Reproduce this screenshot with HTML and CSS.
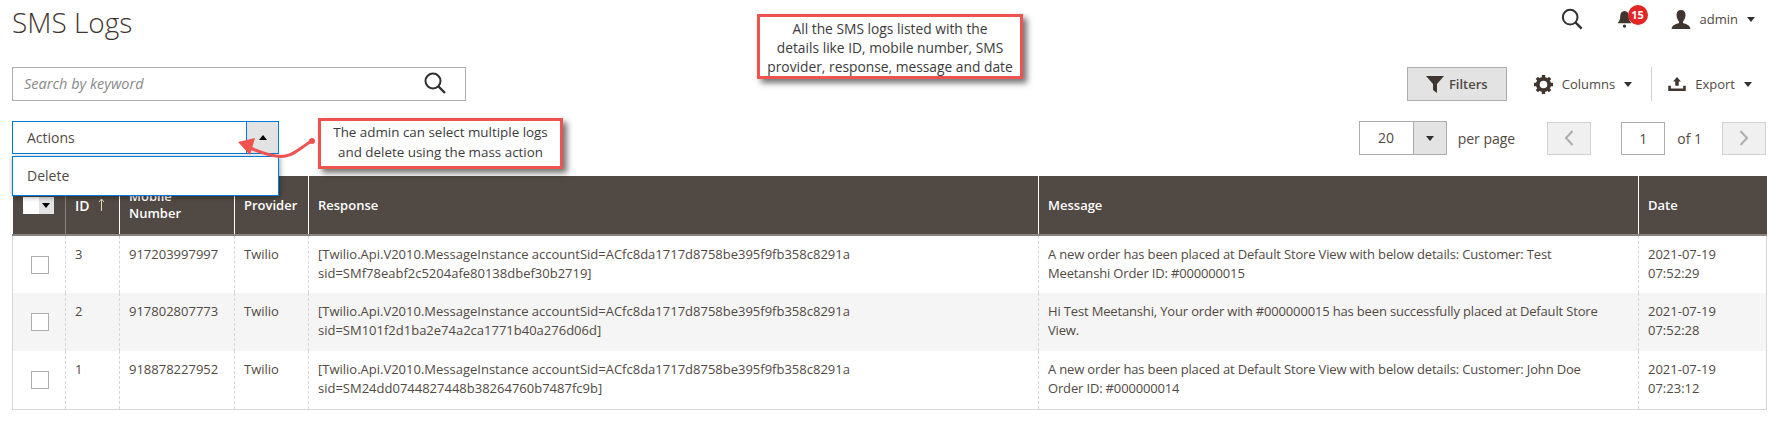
FILE: index.html
```html
<!DOCTYPE html>
<html>
<head>
    <title>SMS Logs</title>
    <link rel="stylesheet" href="styles.css">
</head>
<body>
    <div class="page">
        <header class="page-header">
            <h1>SMS Logs</h1>
            <div class="admin-bar">
                <svg class="top-search" width="22" height="22" viewBox="0 0 24 24"><circle cx="10" cy="10" r="8" fill="none" stroke="#303030" stroke-width="2.200"/><path d="M15.500 15.500L22.500 22.500" stroke="#303030" stroke-width="2.600"/></svg>
                <div class="bell">
                    <svg width="15" height="19" viewBox="0 0 16 20"><path d="M8 1c-3 0-4.500 2.500-4.500 5 0 4-1 6-3 8h15c-2-2-3-4-3-8 0-2.500-1.500-5-4.500-5z" fill="#41362f"/><circle cx="8" cy="17" r="1.800" fill="#41362f"/></svg>
                    <span class="badge">15</span>
                </div>
                <div class="user">
                    <svg width="20" height="19" viewBox="0 0 20 19"><path d="M10 0c3 0 4.500 2 4.500 5s-1.500 5.500-2.500 6.500v1.500c3 1 7 2 7.500 6H.5c.5-4 4.500-5 7.500-6v-1.500C7 10.500 5.500 8 5.500 5S7 0 10 0z" fill="#41362f"/></svg>
                    <span>admin</span>
                    <i class="caret"></i>
                </div>
            </div>
        </header>

        <div class="toolbar">
            <div class="search-box">
                <span>Search by keyword</span>
                <svg width="24" height="24" viewBox="0 0 24 24"><circle cx="10" cy="10" r="7.500" fill="none" stroke="#303030" stroke-width="2"/><path d="M15.500 15.500L22 22" stroke="#303030" stroke-width="2.400"/></svg>
            </div>
            <div class="tools">
                <button class="filters">
                    <svg width="18" height="17" viewBox="0 0 18 17"><path d="M0 0h18l-7 8v9l-4-3V8z" fill="#41362f"/></svg>
                    Filters
                </button>
                <div class="tool columns">
                    <svg width="19" height="19" viewBox="0 0 20 20"><circle cx="10" cy="10" r="6" fill="none" stroke="#41362f" stroke-width="4"/><path d="M10 0v20M0 10h20M3 3l14 14M17 3L3 17" stroke="#41362f" stroke-width="3.500" stroke-dasharray="3.500 13"/></svg>
                    <span>Columns</span>
                    <i class="caret"></i>
                </div>
                <div class="tool export">
                    <svg width="18" height="14" viewBox="0 0 20 16"><path d="M10 0l4.500 5H12v5H8V5H5.500zM0 10h3v3h14v-3h3v6H0z" fill="#41362f"/></svg>
                    <span>Export</span>
                    <i class="caret"></i>
                </div>
            </div>
        </div>

        <div class="toolbar second">
            <div class="actions">
                <span class="actions-label">Actions</span>
                <span class="actions-toggle"><i class="caret up"></i></span>
                <div class="actions-menu">Delete</div>
            </div>
            <div class="pager">
                <div class="per-page-select">
                    <span>20</span>
                    <span class="select-toggle"><i class="caret"></i></span>
                </div>
                <span class="per-page">per page</span>
                <span class="page-btn prev"><svg width="10" height="16" viewBox="0 0 10 16"><path d="M8.500 1L2 8l6.500 7" fill="none" stroke="#adadad" stroke-width="2"/></svg></span>
                <span class="page-input">1</span>
                <span class="page-of">of 1</span>
                <span class="page-btn"><svg width="10" height="16" viewBox="0 0 10 16"><path d="M1.500 1L8 8l-6.500 7" fill="none" stroke="#adadad" stroke-width="2"/></svg></span>
            </div>
        </div>

        <table class="grid">
            <colgroup>
                <col class="col-check"><col class="col-id"><col class="col-number"><col class="col-provider"><col class="col-response"><col class="col-message"><col class="col-date">
            </colgroup>
            <thead>
                <tr>
                    <th><span class="head-check"><b></b><span class="head-toggle"><i class="caret small"></i></span></span></th>
                    <th class="head-id">ID <svg class="sort" width="7" height="13" viewBox="0 0 7 13"><path d="M3.500 13V1M1 4l2.500-3L6 4" fill="none" stroke="#e4dcb8" stroke-width="1"/></svg></th>
                    <th>Mobile Number</th>
                    <th>Provider</th>
                    <th>Response</th>
                    <th>Message</th>
                    <th>Date</th>
                </tr>
            </thead>
            <tbody>
                <tr>
                    <td><span class="check"></span></td>
                    <td>3</td>
                    <td>917203997997</td>
                    <td>Twilio</td>
                    <td>[Twilio.Api.V2010.MessageInstance accountSid=ACfc8da1717d8758be395f9fb358c8291a<br>sid=SMf78eabf2c5204afe80138dbef30b2719]</td>
                    <td class="message">A new order has been placed at Default Store View with below details: Customer: Test<br>Meetanshi Order ID: #000000015</td>
                    <td>2021-07-19<br>07:52:29</td>
                </tr>
                <tr>
                    <td><span class="check"></span></td>
                    <td>2</td>
                    <td>917802807773</td>
                    <td>Twilio</td>
                    <td>[Twilio.Api.V2010.MessageInstance accountSid=ACfc8da1717d8758be395f9fb358c8291a<br>sid=SM101f2d1ba2e74a2ca1771b40a276d06d]</td>
                    <td class="message">Hi Test Meetanshi, Your order with #000000015 has been successfully placed at Default Store<br>View.</td>
                    <td>2021-07-19<br>07:52:28</td>
                </tr>
                <tr>
                    <td><span class="check"></span></td>
                    <td>1</td>
                    <td>918878227952</td>
                    <td>Twilio</td>
                    <td>[Twilio.Api.V2010.MessageInstance accountSid=ACfc8da1717d8758be395f9fb358c8291a<br>sid=SM24dd0744827448b38264760b7487fc9b]</td>
                    <td class="message">A new order has been placed at Default Store View with below details: Customer: John Doe<br>Order ID: #000000014</td>
                    <td>2021-07-19<br>07:23:12</td>
                </tr>
            </tbody>
        </table>

        <div class="callout callout-top">All the SMS logs listed with the<br>details like ID, mobile number, SMS<br>provider, response, message and date</div>
        <div class="callout callout-mass">The admin can select multiple logs<br>and delete using the mass action</div>
        <svg class="callout-arrow" width="86" height="36" viewBox="0 0 86 36">
            <path d="M76 6C64 12 56 24 40 21 32 20 24 17 14 13" fill="none" stroke="#ef5350" stroke-width="3"/>
            <circle cx="76" cy="6" r="3" fill="#ef5350"/>
            <path d="M2 7l17-4-5 17z" fill="#ef5350"/>
        </svg>
    </div>
</body>
</html>
```

FILE: styles.css
```css
body {
    font-family: "Open Sans", Arial, sans-serif;
    font-size: 13px;
    color: #514943;
    margin: 0;
    background-color: #fff;
}

.page {
    position: relative;
    height: 422px;
    padding: 0 12px;
    box-sizing: border-box;
    overflow: hidden;
}

.page-header {
    display: flex;
    justify-content: space-between;
    height: 67px;
}

h1 {
    margin: 3px 0 0;
    font-size: 28px;
    font-weight: 300;
    line-height: 38px;
    color: #41362f;
}

.admin-bar {
    display: flex;
    align-items: center;
    height: 38px;
    padding-right: 11px;
}

.top-search {
    margin-right: 34px;
}

.bell {
    position: relative;
    display: flex;
    margin-right: 39px;
}

.badge {
    position: absolute;
    left: 11px;
    top: -5px;
    width: 20px;
    height: 20px;
    border-radius: 50%;
    background-color: #e22626;
    color: #fff;
    font-size: 11px;
    font-weight: 700;
    line-height: 20px;
    text-align: center;
}

.user {
    display: flex;
    align-items: center;
    gap: 9px;
}

.caret {
    display: inline-block;
    width: 0;
    height: 0;
    border-left: 4.500px solid transparent;
    border-right: 4.500px solid transparent;
    border-top: 5px solid #303030;
}

.caret.up {
    border-top: 0;
    border-bottom: 5px solid #000;
}

.caret.small {
    border-left-width: 4px;
    border-right-width: 4px;
    border-top-color: #000;
}

.toolbar {
    display: flex;
    justify-content: space-between;
    height: 34px;
}

.toolbar.second {
    height: 34px;
    margin-top: 20px;
}

.search-box {
    display: flex;
    align-items: center;
    justify-content: space-between;
    width: 454px;
    padding: 0 18px 2px 11px;
    box-sizing: border-box;
    border: 1px solid #adadad;
    font-size: 14.500px;
    font-style: italic;
    color: #8a8a8a;
}

.tools {
    display: flex;
    align-items: center;
    padding-right: 14px;
}

.filters {
    display: flex;
    align-items: center;
    justify-content: center;
    gap: 5px;
    width: 100px;
    height: 34px;
    margin-right: 27px;
    padding: 0;
    border: 1px solid #adadad;
    background-color: #e3e3e3;
    color: #514943;
    font-family: inherit;
    font-size: 13px;
    font-weight: 600;
}

.tool {
    display: flex;
    align-items: center;
    height: 34px;
    gap: 9px;
}

.columns {
    padding-right: 19px;
    border-right: 1px solid #d0d0d0;
    margin-right: 16px;
}

.actions {
    position: relative;
    display: flex;
    width: 267px;
    height: 33px;
    border: 1px solid #007bdb;
    box-sizing: border-box;
}

.actions-label {
    flex: 1;
    padding-left: 14px;
    line-height: 31px;
    font-size: 14px;
}

.actions-toggle {
    display: flex;
    align-items: center;
    justify-content: center;
    width: 31px;
    border-left: 1px solid #007bdb;
    background-color: #e3e3e3;
}

.actions-menu {
    position: absolute;
    left: -1px;
    right: -1px;
    top: 34px;
    height: 40px;
    box-sizing: border-box;
    padding-left: 14px;
    border: 1px solid #007bdb;
    background-color: #fff;
    font-size: 14px;
    line-height: 38px;
    box-shadow: 1px 1px 5px rgba(0, 0, 0, 0.4);
    z-index: 2;
}

.pager {
    display: flex;
    align-items: center;
}

.per-page-select {
    display: flex;
    width: 88px;
    height: 34px;
    box-sizing: border-box;
    border: 1px solid #adadad;
    font-size: 14px;
    line-height: 32px;
    text-align: center;
}

.per-page-select > span:first-child {
    flex: 1;
}

.select-toggle {
    display: flex;
    align-items: center;
    justify-content: center;
    width: 32px;
    border-left: 1px solid #adadad;
    background-color: #e3e3e3;
}

.per-page {
    margin: 0 32px 0 11px;
    font-size: 14px;
}

.page-btn {
    display: flex;
    align-items: center;
    justify-content: center;
    width: 44px;
    height: 33px;
    box-sizing: border-box;
    border: 1px solid #d1d1d1;
    background-color: #f0f0f0;
}

.page-input {
    width: 44px;
    height: 33px;
    margin-left: 30px;
    box-sizing: border-box;
    border: 1px solid #adadad;
    font-size: 14px;
    line-height: 31px;
    text-align: center;
}

.page-of {
    margin: 0 20px 0 12px;
    font-size: 14px;
}

.grid {
    width: 1754px;
    margin-top: 21px;
    border-collapse: collapse;
    table-layout: fixed;
    border-bottom: 1px solid #d6d6d6;
}

.col-check { width: 53px; }
.col-id { width: 54px; }
.col-number { width: 115px; }
.col-provider { width: 74px; }
.col-response { width: 730px; }
.col-message { width: 600px; }
.col-date { width: 128px; }

.grid th {
    height: 59px;
    padding: 0 9px;
    box-sizing: border-box;
    background-color: #514943;
    border-left: 1px solid #8a837e;
    border-bottom: 2px solid #8a837e;
    color: #fff;
    font-size: 13px;
    font-weight: 600;
    line-height: 17px;
    text-align: left;
}

.grid th:first-child {
    border-left: 0;
}

.grid th + th + th,
.grid th:last-child {
    border-left-color: #fff;
}

.grid th.head-id {
    font-size: 14px;
}

.sort {
    margin-left: 5px;
}

.head-check {
    display: flex;
    width: 31px;
    height: 17px;
    margin-left: 1px;
}

.head-check b {
    width: 16px;
    background-color: #fff;
}

.head-toggle {
    display: flex;
    flex: 1;
    align-items: center;
    justify-content: center;
    background-color: #e3e3e3;
}

.grid td {
    height: 58px;
    padding: 9px 9px 0;
    box-sizing: border-box;
    border-left: 1px dashed #d6d6d6;
    vertical-align: top;
    line-height: 19px;
}

.grid td:first-child {
    border-left: 1px solid #d6d6d6;
}

.grid td:last-child {
    border-right: 1px solid #d6d6d6;
}

.grid td.message {
    letter-spacing: -0.160px;
}

.grid tbody tr:nth-child(2) td {
    background-color: #f5f5f5;
}

.check {
    display: block;
    width: 16px;
    height: 16px;
    margin: 11px 0 0 9px;
    border: 1px solid #adadad;
    background-color: #fff;
}

.callout {
    position: absolute;
    box-sizing: border-box;
    border: 3px solid #ef5350;
    background-color: #fff;
    box-shadow: 4px 4px 6px rgba(0, 0, 0, 0.55);
    color: #3b3b3b;
    text-align: center;
    white-space: nowrap;
}

.callout-top {
    left: 757px;
    top: 14px;
    width: 266px;
    height: 65px;
    padding-top: 2px;
    font-size: 13.800px;
    line-height: 19px;
}

.callout-mass {
    left: 318px;
    top: 118px;
    width: 245px;
    height: 51px;
    padding-top: 1px;
    font-size: 13.400px;
    line-height: 20px;
}

.callout-arrow {
    position: absolute;
    left: 236px;
    top: 135px;
    z-index: 3;
}
```
